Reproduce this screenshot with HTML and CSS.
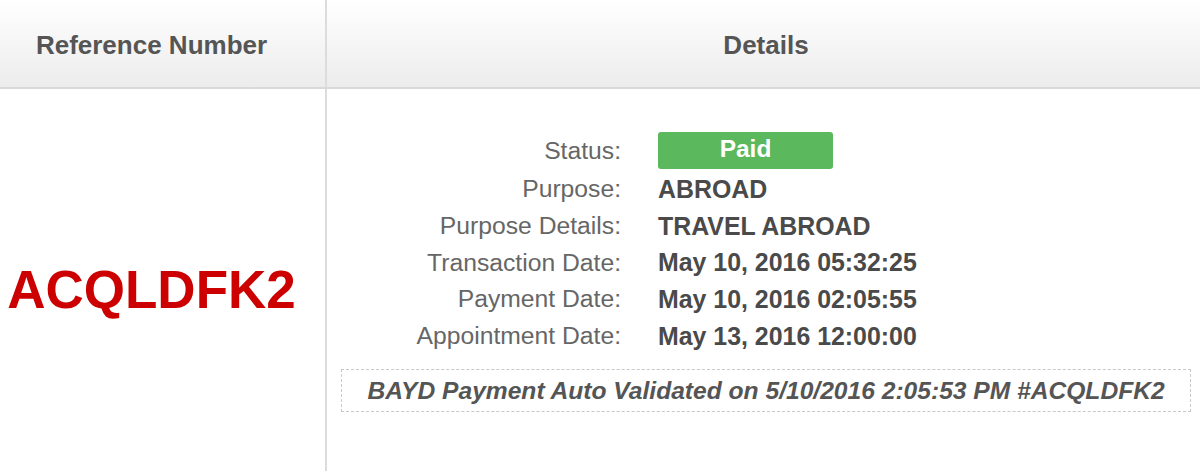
FILE: index.html
```html
<!DOCTYPE html>
<html>
<head>
<meta charset="utf-8">
<link rel="stylesheet" href="styles.css">
</head>
<body>
<div class="table">
  <div class="head">
    <div class="th th-ref">Reference Number</div>
    <div class="th th-details">Details</div>
  </div>
  <div class="row">
    <div class="cell-ref">ACQLDFK2</div>
    <div class="cell-details">
      <div class="info">
        <div class="label status-label">Status:</div>
        <div class="value status-value"><span class="badge">Paid</span></div>
        <div class="label">Purpose:</div>
        <div class="value">ABROAD</div>
        <div class="label">Purpose Details:</div>
        <div class="value">TRAVEL ABROAD</div>
        <div class="label">Transaction Date:</div>
        <div class="value">May 10, 2016 05:32:25</div>
        <div class="label">Payment Date:</div>
        <div class="value">May 10, 2016 02:05:55</div>
        <div class="label">Appointment Date:</div>
        <div class="value">May 13, 2016 12:00:00</div>
      </div>
      <div class="note">BAYD Payment Auto Validated on 5/10/2016 2:05:53 PM #ACQLDFK2</div>
    </div>
  </div>
</div>
</body>
</html>
```
FILE: styles.css
```css
html, body {
  margin: 0;
  padding: 0;
  background: #fff;
}
body {
  font-family: "Liberation Sans", Arial, sans-serif;
  overflow: hidden;
}
.table {
  width: 1200px;
}
.head {
  display: grid;
  grid-template-columns: 325px 2px 1fr;
  height: 87px;
  background: linear-gradient(to bottom, #ffffff 0%, #ececec 100%);
  border-bottom: 2px solid #d9d9d9;
}
.th {
  display: flex;
  align-items: center;
  justify-content: center;
  font-weight: bold;
  font-size: 26px;
  color: #555;
  padding-top: 4px;
}
.th-ref {
  padding-right: 22px;
  grid-column: 1;
}
.th-details {
  grid-column: 3;
  border-left: 2px solid #dcdcdc;
  margin-left: -2px;
  padding-left: 14px;
  padding-right: 9px;
}
.row {
  display: grid;
  grid-template-columns: 325px 1fr;
  min-height: 400px;
}
.cell-ref {
  display: flex;
  align-items: center;
  justify-content: center;
  padding-right: 22px;
  font-weight: bold;
  font-size: 53px;
  color: #cc0000;
  padding-top: 1px;
}
.cell-details {
  border-left: 2px solid #dcdcdc;
  padding: 41px 9px 0 14px;
}
.info {
  display: grid;
  grid-template-columns: 280px auto;
  grid-template-rows: 41px;
  column-gap: 37px;
  grid-auto-rows: 36.7px;
  font-size: 24.7px;
  align-items: center;
}
.info .status-label,
.info .status-value {
  height: 41px;
  display: flex;
  align-items: center;
}
.info .status-label {
  justify-content: flex-end;
}
.label {
  text-align: right;
  color: #666;
}
.value {
  font-weight: bold;
  color: #4a4a4a;
  font-size: 24.9px;
}
.badge {
  display: inline-block;
  width: 175px;
  height: 37px;
  line-height: 34px;
  margin-top: -1px;
  background: #5cb85c;
  color: #fff;
  border-radius: 3px;
  text-align: center;
  font-size: 24.5px;
  font-weight: bold;
}
.note {
  margin-top: 15px;
  border: 1px dashed #c8c8c8;
  height: 41px;
  display: flex;
  align-items: center;
  justify-content: center;
  font-size: 24.6px;
  font-weight: bold;
  font-style: italic;
  color: #555;
}
```
